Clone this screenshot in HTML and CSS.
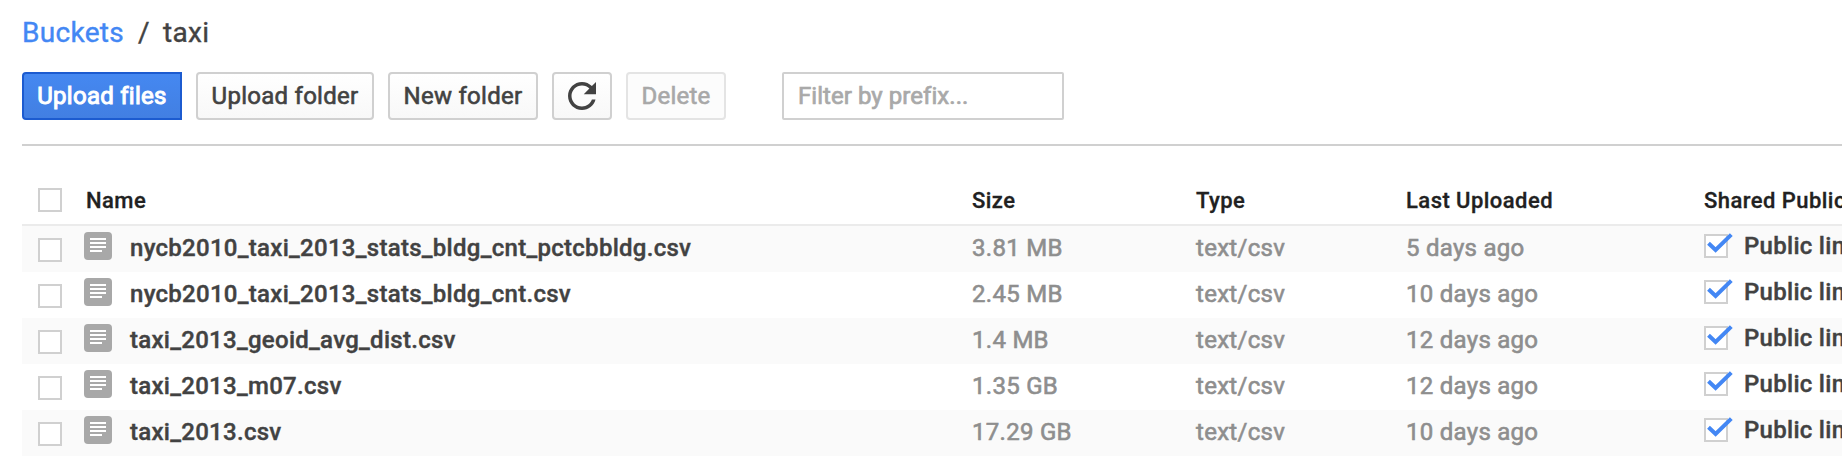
FILE: index.html
```html
<!DOCTYPE html>
<html lang="en">
<head>
<meta charset="utf-8">
<title>taxi</title>
<link rel="stylesheet" href="styles.css">
</head>
<body>
<svg width="0" height="0" class="defs">
  <symbol id="doc" viewBox="0 0 28 28"><rect width="28" height="28" rx="4" fill="#a8a8a8"/><path d="M6 7h16M6 11h16M6 15h16M6 19h12" stroke="#fff" stroke-width="2"/></symbol>
  <symbol id="check" viewBox="0 0 30 26"><rect x="1" y="3" width="22" height="22" fill="#fff" stroke="#d0d0d0" stroke-width="2"/><path d="M4.5 11.2L11.6 18L27.3 2.6" fill="none" stroke="#4387f4" stroke-width="4"/></symbol>
</svg>
<main class="page">
  <nav class="crumbs"><a class="crumb-link">Buckets</a><span class="slash">/</span><span class="current">taxi</span></nav>
  <div class="toolbar">
    <button class="btn primary upload-files">Upload files</button>
    <button class="btn upload-folder">Upload folder</button>
    <button class="btn new-folder">New folder</button>
    <button class="btn refresh" aria-label="Refresh"><svg width="28" height="28" viewBox="4 4 16 16"><path d="M17.65 6.35C16.2 4.9 14.21 4 12 4c-4.42 0-7.99 3.58-7.99 8s3.57 8 7.99 8c3.73 0 6.84-2.55 7.73-6h-2.08c-.82 2.33-3.04 4-5.65 4-3.31 0-6-2.69-6-6s2.69-6 6-6c1.66 0 3.14.69 4.22 1.78L13 11h7V4z" fill="#424242"/></svg></button>
    <button class="btn delete" disabled>Delete</button>
    <input class="filter" type="text" placeholder="Filter by prefix...">
  </div>
  <section class="files">
    <div class="row head"><span class="box"></span><span class="head-name">Name</span><span>Size</span><span>Type</span><span>Last Uploaded</span><span>Shared Publicly</span></div>
    <div class="row"><span class="box"></span><svg class="doc"><use href="#doc"/></svg><span class="name">nycb2010_taxi_2013_stats_bldg_cnt_pctcbbldg.csv</span><span>3.81 MB</span><span>text/csv</span><span>5 days ago</span><span class="shared"><svg class="check"><use href="#check"/></svg>Public link</span></div>
    <div class="row"><span class="box"></span><svg class="doc"><use href="#doc"/></svg><span class="name">nycb2010_taxi_2013_stats_bldg_cnt.csv</span><span>2.45 MB</span><span>text/csv</span><span>10 days ago</span><span class="shared"><svg class="check"><use href="#check"/></svg>Public link</span></div>
    <div class="row"><span class="box"></span><svg class="doc"><use href="#doc"/></svg><span class="name">taxi_2013_geoid_avg_dist.csv</span><span>1.4 MB</span><span>text/csv</span><span>12 days ago</span><span class="shared"><svg class="check"><use href="#check"/></svg>Public link</span></div>
    <div class="row"><span class="box"></span><svg class="doc"><use href="#doc"/></svg><span class="name">taxi_2013_m07.csv</span><span>1.35 GB</span><span>text/csv</span><span>12 days ago</span><span class="shared"><svg class="check"><use href="#check"/></svg>Public link</span></div>
    <div class="row"><span class="box"></span><svg class="doc"><use href="#doc"/></svg><span class="name">taxi_2013.csv</span><span>17.29 GB</span><span>text/csv</span><span>10 days ago</span><span class="shared"><svg class="check"><use href="#check"/></svg>Public link</span></div>
  </section>
</main>
</body>
</html>
```
FILE: styles.css
```css
* { box-sizing: border-box; }
body {
  margin: 0;
  background: #fff;
  color: #424242;
  font: 24px/28px Roboto, sans-serif;
  overflow: hidden;
}
.defs { display: block; }
.page { padding-left: 22px; height: 472px; overflow: hidden; }
.crumbs { display: flex; height: 72px; padding-top: 15px; font-size: 28px; line-height: 36px; letter-spacing: 0.3px; -webkit-text-stroke: 0.4px currentColor; }
.crumb-link { width: 116px; color: #4387f4; }
.slash { width: 25px; }
.toolbar { display: flex; height: 74px; gap: 14px; border-bottom: 2px solid #d0d0d0; }
.btn {
  height: 48px;
  padding: 0;
  border: 2px solid #d0d0d0;
  border-radius: 4px;
  background: linear-gradient(#fff, #f8f8f8);
  color: #424242;
  font: 24px/28px Roboto, sans-serif;
  letter-spacing: 0.27px;
  -webkit-text-stroke: 0.6px currentColor;
}
.primary {
  border-color: #1c5bd0;
  border-radius: 4px 0 0 4px;
  background: linear-gradient(#4588f1, #427fe2);
  color: #fff;
  -webkit-text-stroke-width: 1px;
}
.upload-files { width: 160px; }
.upload-folder { width: 178px; }
.new-folder { width: 150px; }
.refresh { display: flex; align-items: center; justify-content: center; width: 60px; padding: 0; }
.delete { width: 100px; border-color: #e4e4e4; background: #fcfcfc; color: #a8a8a8; }
.filter {
  width: 282px;
  height: 48px;
  margin-left: 42px;
  padding: 0 14px;
  border: 2px solid #d0d0d0;
  border-radius: 2px;
  font: 24px/28px Roboto, sans-serif;
  letter-spacing: 0.05px;
}
.filter::placeholder { color: #a9a9a9; -webkit-text-stroke: 0.7px #a9a9a9; }
.files { padding-top: 26px; }
.row {
  display: grid;
  grid-template-columns: 46px 46px 842px 224px 210px 298px 238px;
  height: 46px;
  padding-left: 16px;
  padding-top: 6px;
  align-items: start;
  color: #8e8e8e;
  line-height: 32px;
  white-space: nowrap;
  letter-spacing: 0.28px;
  -webkit-text-stroke: 0.6px currentColor;
}
.row:nth-child(even) { background: #fafafa; }
.head {
  height: 54px;
  border-bottom: 2px solid #ebebeb;
  color: #212121;
  font-size: 22px;
  font-weight: 500;
  padding-top: 10px;
  letter-spacing: 0.45px;
  -webkit-text-stroke-width: 0.3px;
}
.head > span { padding-top: 3px; }
.head-name { grid-column: span 2; margin-left: 2px; }
.row > .box { width: 24px; height: 24px; margin-top: 6px; padding: 0; border: 2px solid #d0d0d0; background: #fff; }
.doc { width: 28px; height: 28px; }
.name, .shared { color: #424242; font-weight: 500; -webkit-text-stroke-width: 0.4px; }
.row > .shared { display: flex; margin-top: -2px; }
.check { flex: none; width: 30px; height: 26px; margin: 2px 10px 0 0; }
```
